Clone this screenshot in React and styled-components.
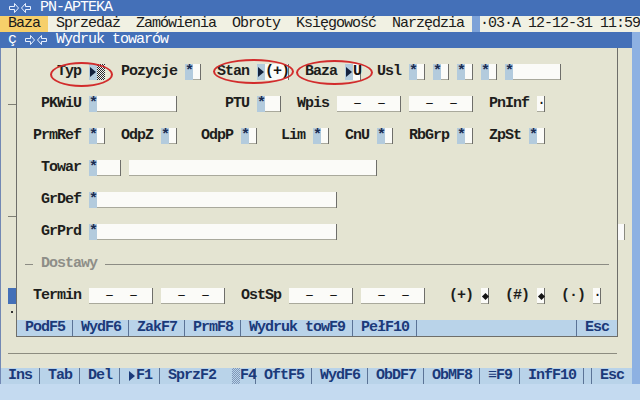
import React from "react";
import styled, { createGlobalStyle, css } from "styled-components";

const BLUE = "#4470b8";
const BEIGE = "#e4e4d2";
const CREAM = "#f1f1e3";
const BAR = "#b9d3e9";
const NAVY = "#1b3a7a";
const CELL = "#b3cbdd";
const EDGE = "#6e6e6a";
const SEP = "#5b7396";

const GlobalStyle = createGlobalStyle`
  html, body { margin: 0; padding: 0; }
  body {
    background: #c4daf0;
    font-family: "Liberation Mono", "DejaVu Sans Mono", monospace;
    font-size: 15px;
    letter-spacing: -1px;
    line-height: 16px;
  }
`;

const Screen = styled.div`
  width: 640px;
  height: 400px;
  overflow: hidden;
  display: flex;
  flex-direction: column;
`;

const TitleBar = styled.div`
  height: 16px;
  flex: none;
  display: flex;
  align-items: center;
  gap: 8px;
  padding-left: 8px;
  background: ${BLUE};
  color: #fff;
  white-space: pre;
`;

const MenuBar = styled.div`
  height: 16px;
  flex: none;
  display: flex;
  background: ${CREAM};
  color: #1a1a1a;
  white-space: pre;
`;

const MenuItem = styled.span`
  padding: 0 8px;
  background: ${(p) => (p.$active ? "#f6cf6a" : "transparent")};
`;

const MenuSep = styled.span`
  width: 8px;
  background: #7da2d8;
`;

const Main = styled.div`
  height: 352px;
  flex: none;
  display: flex;
`;

const Window = styled.div`
  width: 632px;
  display: flex;
  flex-direction: column;
`;

const RightStrip = styled.div`
  flex: 1;
  background: #8db1e2;
`;

const WinBody = styled.div`
  height: 320px;
  display: flex;
  flex-direction: column;
  background: ${BEIGE};
  box-shadow: inset 1px 0 #7288b4;
`;

const Upper = styled.div`
  height: 289px;
  display: flex;
`;

const Gutter = styled.div`
  width: 16px;
  flex: none;
  display: grid;
  grid-template-columns: 8px 8px;
  grid-template-rows: repeat(18, 16px);
`;

const Tick = styled.span`
  grid-row: ${(p) => p.$r};
  grid-column: 2;
  align-self: center;
  height: 1px;
  background: #7e7e74;
`;

const Block = styled.span`
  grid-row: ${(p) => p.$r};
  grid-column: 2;
  background: ${BLUE};
`;

const Dot = styled.span`
  grid-row: ${(p) => p.$r};
  grid-column: 2;
  align-self: center;
  justify-self: center;
  width: 2px;
  height: 2px;
  background: #333;
`;

const Panel = styled.div`
  width: 600px;
  flex: none;
  display: flex;
  flex-direction: column;
  border: 1px solid ${EDGE};
  border-top: none;
`;

const Form = styled.div`
  height: 272px;
  display: grid;
  grid-template-columns: repeat(75, 8px);
  grid-template-rows: repeat(17, 16px);
`;

const Side = styled.div`
  flex: 1;
  display: grid;
  grid-template-rows: repeat(18, 16px);
`;

const Thumb = styled.span`
  grid-row: 12;
  width: 7px;
  background: #fafafa;
  box-shadow: inset -1px 0 #8a8a80;
`;

const Lower = styled.div`
  flex: 1;
  padding: 16px 0 0 8px;
`;

const Rule = styled.div`
  width: 609px;
  height: 1px;
  background: #8c8c80;
`;

const placed = css`
  grid-row: ${(p) => p.$r - 2};
  grid-column: ${(p) => p.$c - 1} / span ${(p) => p.$n || 1};
`;

const Label = styled.span`
  ${placed};
  font-weight: bold;
  color: #1e1e1c;
  white-space: pre;
`;

const Field = styled.span`
  ${placed};
  display: flex;
  height: 16px;
  background: #fbfbf8;
  color: #161616;
  white-space: pre;
  box-shadow: inset -1px 0 ${EDGE}, inset 0 -1px #a9a99c;
`;

const Star = styled.span`
  width: 8px;
  flex: none;
  background: ${CELL};
  color: #1a2c52;
  font-weight: bold;
  text-align: center;
  letter-spacing: 0;
`;

const Arrow = styled.span`
  width: 8px;
  flex: none;
  display: flex;
  align-items: center;
  justify-content: center;
  background: ${(p) => p.$bg || CELL};

  &::before {
    content: "";
    border-left: 6px solid ${(p) => p.$color || "#14223e"};
    border-top: 5px solid transparent;
    border-bottom: 5px solid transparent;
  }
`;

const Checker = styled.span`
  width: 8px;
  flex: none;
  background: repeating-conic-gradient(#2a2a2a 0 25%, #f4f4f4 0 50%) 0 0 / 2px 2px;
`;

const Dots = styled.span`
  width: 8px;
  flex: none;
  background: repeating-conic-gradient(#7f96b8 0 25%, ${BAR} 0 50%) 0 0 / 2px 2px;
`;

const Box = styled.span`
  background: #fbfbf8;
  color: #161616;
  white-space: pre;
  box-shadow: inset -1px 0 ${EDGE};
`;

const Diamond = styled.span`
  width: 8px;
  display: flex;
  align-items: center;
  justify-content: center;

  &::before {
    content: "";
    width: 5px;
    height: 5px;
    background: #141414;
    transform: rotate(45deg);
  }
`;

const Oval = styled.span`
  ${placed};
  position: relative;
  display: flex;
  gap: 8px;
  font-weight: bold;
  color: #1e1e1c;

  &::after {
    content: "";
    position: absolute;
    top: ${(p) => -p.$t}px;
    right: ${(p) => -p.$rr}px;
    bottom: ${(p) => -p.$b}px;
    left: ${(p) => -p.$l}px;
    border: 2px solid #d22c2c;
    border-radius: 50%;
    pointer-events: none;
  }
`;

const Value = styled.span`
  display: flex;
`;

const Section = styled.div`
  ${placed};
  display: flex;
  align-items: center;
  gap: 8px;
  color: #8e8e88;
  font-weight: bold;

  &::before {
    content: "";
    width: 8px;
    height: 1px;
    background: #8c8c84;
  }

  &::after {
    content: "";
    flex: 1;
    height: 1px;
    background: #8c8c84;
  }
`;

const KeyBar = styled.div`
  height: 16px;
  flex: none;
  display: flex;
  background: ${BAR};
  color: ${NAVY};
  font-weight: bold;
  white-space: pre;
  box-shadow: ${(p) => (p.$edge ? "inset 1px 0 #7288b4" : "none")};
`;

const Key = styled.span`
  flex: ${(p) => (p.$w ? `0 0 ${p.$w}px` : "1")};
  display: flex;
  padding-left: ${(p) => (p.$tight ? 0 : 8)}px;
  box-shadow: ${(p) => (p.$plain ? "none" : `inset -1px 0 ${SEP}`)};
`;

const Footer = styled.div`
  flex: 1;
  background: #c4daf0;
`;

const AppIcon = () => (
  <svg width="24" height="16" viewBox="0 0 24 16">
    <path
      d="M1.5 6.5H6.5V3.5L10.5 8L6.5 12.5V9.5H1.5Z M22.5 6.5H17.5V3.5L13.5 8L17.5 12.5V9.5H22.5Z"
      fill="none"
      stroke="#e8f0ff"
      strokeWidth="1"
    />
  </svg>
);

const Lbl = ({ r, c, children }) => (
  <Label $r={r} $c={c} $n={children.length}>
    {children}
  </Label>
);

const Input = ({ r, c, n, star, text }) => (
  <Field $r={r} $c={c} $n={n}>
    {star && <Star>*</Star>}
    {text}
  </Field>
);

const DATE = "  –  –  ";

const menu = ["Baza", "Sprzedaż", "Zamówienia", "Obroty", "Księgowość", "Narzędzia"];

const panelKeys = [
  ["PodF5", 48],
  ["WydF6", 48],
  ["ZakF7", 48],
  ["PrmF8", 48],
  ["Wydruk towF9", 104],
  ["PełF10", 56],
];

// short fields: [label, labelCol, fieldCol] on row 8
const row8 = [
  ["PrmRef", 4, 11],
  ["OdpZ", 15, 20],
  ["OdpP", 25, 30],
  ["Lim", 35, 39],
  ["CnU", 43, 47],
  ["RbGrp", 51, 57],
  ["ZpSt", 61, 66],
];

export default function App() {
  return (
    <>
      <GlobalStyle />
      <Screen>
        <TitleBar>
          <AppIcon />
          <span>PN-APTEKA</span>
        </TitleBar>

        <MenuBar>
          {menu.map((m, i) => (
            <MenuItem key={m} $active={i === 0}>
              {m}
            </MenuItem>
          ))}
          <MenuSep />
          <span>·03·A 12-12-31 11:59</span>
        </MenuBar>

        <Main>
          <Window>
            <TitleBar>
              <span>ç</span>
              <AppIcon />
              <span>Wydruk towarów</span>
            </TitleBar>

            <WinBody>
              <Upper>
                <Gutter>
                  <Tick $r={4} />
                  <Tick $r={11} />
                  <Block $r={16} />
                  <Dot $r={17} />
                </Gutter>

                <Panel>
                  <Form>
                    <Oval $r={4} $c={7} $n={6} $t={2} $rr={8} $b={7} $l={7}>
                      <span>Typ</span>
                      <Value>
                        <Arrow />
                        <Checker />
                      </Value>
                    </Oval>
                    <Lbl r={4} c={15}>Pozycje</Lbl>
                    <Input r={4} c={23} n={2} star />
                    <Oval $r={4} $c={27} $n={9} $t={5} $rr={5} $b={4} $l={4}>
                      <span>Stan</span>
                      <Value>
                        <Arrow />
                        <Box>(+)</Box>
                      </Value>
                    </Oval>
                    <Oval $r={4} $c={38} $n={7} $t={4} $rr={12} $b={5} $l={9}>
                      <span>Baza</span>
                      <Value>
                        <Arrow />
                        <Box>U</Box>
                      </Value>
                    </Oval>
                    <Lbl r={4} c={47}>Usl</Lbl>
                    {[51, 54, 57, 60].map((c) => (
                      <Input key={c} r={4} c={c} n={2} star />
                    ))}
                    <Input r={4} c={63} n={7} star />

                    <Lbl r={6} c={5}>PKWiU</Lbl>
                    <Input r={6} c={11} n={11} star />
                    <Lbl r={6} c={28}>PTU</Lbl>
                    <Input r={6} c={32} n={3} star />
                    <Lbl r={6} c={37}>Wpis</Lbl>
                    <Input r={6} c={42} n={8} text={DATE} />
                    <Input r={6} c={51} n={8} text={DATE} />
                    <Lbl r={6} c={61}>PnInf</Lbl>
                    <Input r={6} c={67} n={1} text="·" />

                    {row8.map(([t, lc, fc]) => (
                      <React.Fragment key={t}>
                        <Lbl r={8} c={lc}>{t}</Lbl>
                        <Input r={8} c={fc} n={2} star />
                      </React.Fragment>
                    ))}

                    <Lbl r={10} c={5}>Towar</Lbl>
                    <Input r={10} c={11} n={4} star />
                    <Input r={10} c={16} n={31} />

                    <Lbl r={12} c={5}>GrDef</Lbl>
                    <Input r={12} c={11} n={31} star />

                    <Lbl r={14} c={5}>GrPrd</Lbl>
                    <Input r={14} c={11} n={31} star />

                    <Section $r={16} $c={3} $n={73}>Dostawy</Section>

                    <Lbl r={18} c={4}>Termin</Lbl>
                    <Input r={18} c={11} n={8} text={DATE} />
                    <Input r={18} c={20} n={8} text={DATE} />
                    <Lbl r={18} c={30}>OstSp</Lbl>
                    <Input r={18} c={36} n={8} text={DATE} />
                    <Input r={18} c={45} n={8} text={DATE} />
                    <Lbl r={18} c={56}>(+)</Lbl>
                    <Field $r={18} $c={60}>
                      <Diamond />
                    </Field>
                    <Lbl r={18} c={63}>(#)</Lbl>
                    <Field $r={18} $c={67}>
                      <Diamond />
                    </Field>
                    <Lbl r={18} c={70}>(·)</Lbl>
                    <Input r={18} c={74} n={1} text="·" />
                  </Form>

                  <KeyBar>
                    {panelKeys.map(([t, w]) => (
                      <Key key={t} $w={w}>
                        {t}
                      </Key>
                    ))}
                    <Key />
                    <Key $w={32} $plain>
                      Esc
                    </Key>
                  </KeyBar>
                </Panel>

                <Side>
                  <Thumb />
                </Side>
              </Upper>

              <Lower>
                <Rule />
              </Lower>
            </WinBody>

            <KeyBar $edge>
              <Key $w={32}>Ins</Key>
              <Key $w={32}>Tab</Key>
              <Key $w={32}>Del</Key>
              <Key $w={32}>
                <Arrow $bg="transparent" $color={NAVY} />
                F1
              </Key>
              <Key $w={64} $plain>
                SprzF2
              </Key>
              <Key $w={24} $tight>
                <Dots />
                F4
              </Key>
              <Key $w={48}>OftF5</Key>
              <Key $w={48}>WydF6</Key>
              <Key $w={48}>ObDF7</Key>
              <Key $w={48}>ObMF8</Key>
              <Key $w={32}>≡F9</Key>
              <Key $w={56}>InfF10</Key>
              <Key />
              <Key $w={32} $plain>
                Esc
              </Key>
            </KeyBar>
          </Window>
          <RightStrip />
        </Main>

        <Footer />
      </Screen>
    </>
  );
}
